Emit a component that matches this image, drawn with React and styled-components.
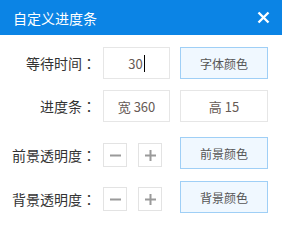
import React from "react";
import styled, { createGlobalStyle } from "styled-components";

const Global = createGlobalStyle`
  html, body { margin: 0; padding: 0; background: #fff; }
  body { font-family: "Noto Sans CJK SC", "Microsoft YaHei", sans-serif; }
`;

const Dialog = styled.div`
  width: 282px;
  height: 228px;
  background: #fff;
  display: flex;
  flex-direction: column;
`;

const Header = styled.div`
  height: 35px;
  background: #0b84e5;
  color: #fff;
  display: flex;
  align-items: center;
  justify-content: space-between;
  padding: 0 12px 0 13px;
  box-sizing: border-box;
`;

const Title = styled.div`
  font-size: 14px;
  line-height: 1;
`;

const Close = styled.button`
  width: 14px;
  height: 14px;
  padding: 0;
  border: none;
  background: transparent;
  display: flex;
  align-items: center;
  justify-content: center;
  cursor: pointer;
`;

const Body = styled.div`
  padding-top: 12px;
  display: flex;
  flex-direction: column;
`;

const Row = styled.div`
  display: flex;
  align-items: center;
  height: 32px;
  margin-top: ${(p) => p.$gap || 0}px;
`;

const Label = styled.div`
  width: 96px;
  margin-right: 7px;
  text-align: right;
  font-size: 14px;
  color: #333;
  white-space: nowrap;
  padding-top: ${(p) => (p.$low ? 3 : 0)}px;
`;

const Colon = styled.span`
  display: inline-block;
  width: 14px;
  text-align: center;
  font-family: "Noto Sans CJK TC", "Noto Sans CJK SC", sans-serif;
`;

const Field = styled.div`
  width: ${(p) => p.$w}px;
  height: 32px;
  box-sizing: border-box;
  border: 1px solid #e6e6e6;
  display: flex;
  align-items: center;
  justify-content: center;
  font-size: 13px;
  color: #665a55;
  margin-right: ${(p) => p.$mr || 0}px;
`;

const Caret = styled.span`
  display: inline-block;
  width: 1px;
  height: 17px;
  background: #000;
  margin-left: 1px;
`;

const Steppers = styled.div`
  width: 67px;
  margin-right: 10px;
  display: flex;
  gap: 11px;
  padding-top: 4px;
`;

const StepBtn = styled.button`
  width: 24px;
  height: 24px;
  padding: 0;
  box-sizing: border-box;
  border: 1px solid #e3e3e3;
  background: #fff;
  display: flex;
  align-items: center;
  justify-content: center;
  cursor: pointer;
`;

const ColorBtn = styled.button`
  width: 88px;
  height: 32px;
  box-sizing: border-box;
  border: 1px solid #9fcff6;
  background: #f0f8ff;
  color: #555;
  font-family: "Noto Sans CJK SC", sans-serif;
  font-size: 12px;
  padding: 0;
  cursor: pointer;
`;

const Minus = () => (
  <svg width="11" height="11" viewBox="0 0 11 11">
    <rect x="0" y="4.5" width="11" height="2" fill="#9a9a9a" />
  </svg>
);

const Plus = () => (
  <svg width="11" height="11" viewBox="0 0 11 11">
    <rect x="0" y="4.5" width="11" height="2" fill="#9a9a9a" />
    <rect x="4.5" y="0" width="2" height="11" fill="#9a9a9a" />
  </svg>
);

export default function App() {
  return (
    <>
      <Global />
      <Dialog>
        <Header>
          <Title>自定义进度条</Title>
          <Close aria-label="close">
            <svg width="13" height="13" viewBox="0 0 13 13">
              <path d="M1.5 1.5 L11.5 11.5 M11.5 1.5 L1.5 11.5" stroke="#fff" strokeWidth="2.4" />
            </svg>
          </Close>
        </Header>
        <Body>
          <Row>
            <Label>等待时间<Colon>：</Colon></Label>
            <Field $w={67} $mr={10}>
              30<Caret />
            </Field>
            <ColorBtn>字体颜色</ColorBtn>
          </Row>
          <Row $gap={11}>
            <Label>进度条<Colon>：</Colon></Label>
            <Field $w={67} $mr={10}>宽 360</Field>
            <Field $w={88}>高 15</Field>
          </Row>
          <Row $gap={15}>
            <Label $low>前景透明度<Colon>：</Colon></Label>
            <Steppers>
              <StepBtn><Minus /></StepBtn>
              <StepBtn><Plus /></StepBtn>
            </Steppers>
            <ColorBtn>前景颜色</ColorBtn>
          </Row>
          <Row $gap={12}>
            <Label $low>背景透明度<Colon>：</Colon></Label>
            <Steppers>
              <StepBtn><Minus /></StepBtn>
              <StepBtn><Plus /></StepBtn>
            </Steppers>
            <ColorBtn>背景颜色</ColorBtn>
          </Row>
        </Body>
      </Dialog>
    </>
  );
}
